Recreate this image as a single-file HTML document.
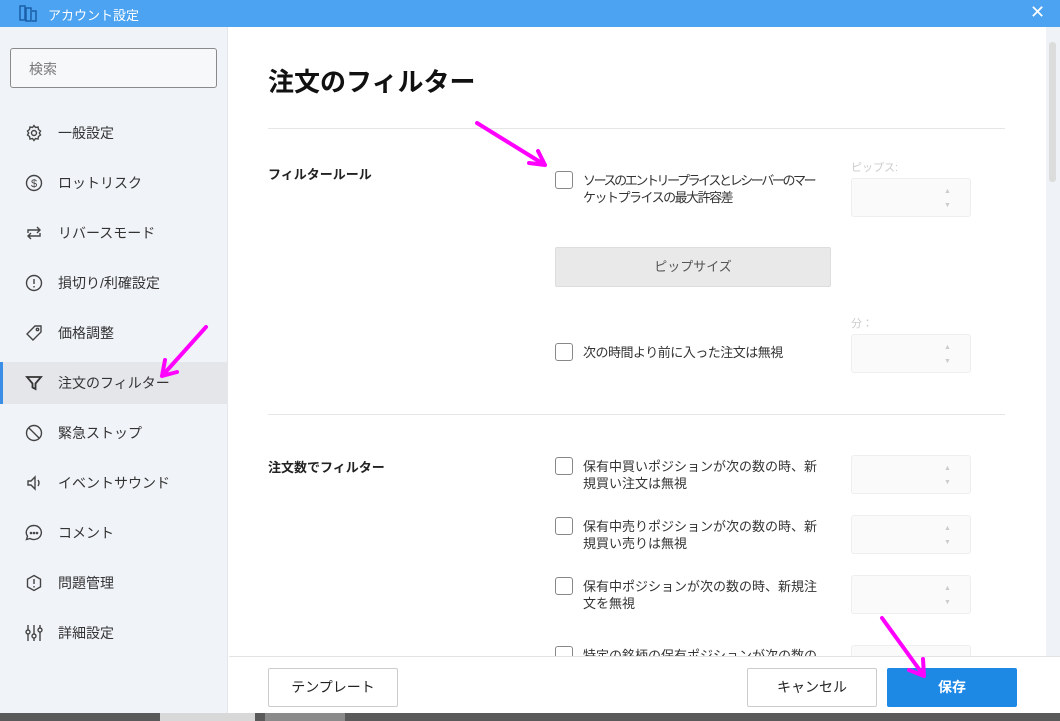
<!DOCTYPE html>
<html><head><meta charset="utf-8"><style>
*{margin:0;padding:0;box-sizing:border-box}
body{width:1060px;height:721px;overflow:hidden;position:relative;background:#fff;font-family:"Liberation Sans","Noto Sans CJK JP",sans-serif;color:#222}
.a{position:absolute}
.title{left:0;top:0;width:1060px;height:27px;background:#4ba3f1;color:#fff;font-size:13px}
.side{left:0;top:27px;width:228px;height:686px;background:#f0f3f8;border-right:1px solid #e3e6ea}
.search{left:10px;top:48px;width:207px;height:40px;border:1px solid #8a8a8a;border-radius:3px;background:#f7f8fa;font-size:14px;color:#777;padding:10px 18px}
.item{left:0;width:228px;height:42px;font-size:14px;color:#333}
.item span{position:absolute;left:58px;top:11px}
.item svg{position:absolute;left:25px;top:12px}
.cb{width:18px;height:18px;border:1px solid #888;border-radius:3px;background:#fff}
.lbl{font-size:13px;color:#333;line-height:17px;white-space:nowrap}
.inp{width:120px;height:39px;border:1px solid #eee;border-radius:3px;background:#fafafa}
.inp:after{content:"▲\A▼";white-space:pre;position:absolute;left:92px;top:6px;font-size:7px;line-height:14px;color:#ccc}
.hr{height:1px;background:#e6e6e6}
.btn{height:39px;border:1px solid #ccc;background:#fff;font-size:14px;text-align:center;line-height:37px;border-radius:2px}
</style></head><body>
<div class="a title">
<svg class="a" style="left:19px;top:5px" width="18" height="17" viewBox="0 0 18 17" fill="none" stroke="#1a5fa8" stroke-width="1.5"><rect x="1" y="1" width="5" height="14"/><rect x="7" y="3" width="5" height="13"/><path d="M13 6h4v10h-4"/></svg>
<span class="a" style="left:48px;top:5px">アカウント設定</span>
<span class="a" style="left:1030px;top:2px;font-size:18px">✕</span>
</div>
<div class="a side"></div>
<div class="a search">検索</div>

<div class="a item" style="top:112px"><svg width="18" height="18" viewBox="0 0 18 18" fill="none" stroke="#444" stroke-width="1.4"><path d="M9 1.5l1.5 2 2.5-.5.5 2.5 2 1.5-1.2 2 1.2 2-2 1.5-.5 2.5-2.5-.5-1.5 2-1.5-2-2.5.5-.5-2.5-2-1.5 1.2-2-1.2-2 2-1.5.5-2.5 2.5.5z"/><circle cx="9" cy="9" r="2.5"/></svg><span>一般設定</span></div>
<div class="a item" style="top:162px"><svg width="18" height="18" viewBox="0 0 18 18" fill="none" stroke="#444" stroke-width="1.4"><circle cx="9" cy="9" r="7.5"/><text x="9" y="13" font-size="11" text-anchor="middle" fill="#444" stroke="none" font-family="Liberation Sans">$</text></svg><span>ロットリスク</span></div>
<div class="a item" style="top:212px"><svg width="18" height="18" viewBox="0 0 18 18" fill="none" stroke="#444" stroke-width="1.4"><path d="M3 9V6h12M12 3l3 3-3 3M15 9v3H3M6 15l-3-3 3-3"/></svg><span>リバースモード</span></div>
<div class="a item" style="top:262px"><svg width="18" height="18" viewBox="0 0 18 18" fill="none" stroke="#444" stroke-width="1.4"><circle cx="9" cy="9" r="7.5"/><path d="M9 5v5M9 12v1.5"/></svg><span>損切り/利確設定</span></div>
<div class="a item" style="top:312px"><svg width="18" height="18" viewBox="0 0 18 18" fill="none" stroke="#444" stroke-width="1.4"><path d="M10 2h6v6l-8 8-6-6z"/><circle cx="12.5" cy="5.5" r="1.2"/></svg><span>価格調整</span></div>
<div class="a item" style="top:362px;background:#e4e6ea;border-left:3px solid #3a8ee6"><svg width="18" height="18" viewBox="0 0 18 18" fill="none" stroke="#333" stroke-width="1.8" style="left:22px"><path d="M2 3h14l-5.5 6.5V15l-3-1.5V9.5z"/></svg><span style="left:55px">注文のフィルター</span></div>
<div class="a item" style="top:412px"><svg width="18" height="18" viewBox="0 0 18 18" fill="none" stroke="#444" stroke-width="1.4"><circle cx="9" cy="9" r="7.5"/><path d="M3.7 3.7l10.6 10.6"/></svg><span>緊急ストップ</span></div>
<div class="a item" style="top:462px"><svg width="18" height="18" viewBox="0 0 18 18" fill="none" stroke="#444" stroke-width="1.4"><path d="M3 7h3l4-4v12l-4-4H3zM13 6q2 3 0 6"/></svg><span>イベントサウンド</span></div>
<div class="a item" style="top:512px"><svg width="18" height="18" viewBox="0 0 18 18" fill="none" stroke="#444" stroke-width="1.4"><path d="M9 1.5a7.5 7 0 1 1-4 13l-3.5 1 1-3.2A7.5 7 0 0 1 9 1.5z"/><circle cx="6" cy="9" r=".6"/><circle cx="9" cy="9" r=".6"/><circle cx="12" cy="9" r=".6"/></svg><span>コメント</span></div>
<div class="a item" style="top:562px"><svg width="18" height="18" viewBox="0 0 18 18" fill="none" stroke="#444" stroke-width="1.4"><path d="M9 1.5l6.5 3.7v7.6L9 16.5l-6.5-3.7V5.2z"/><path d="M9 5v5M9 12v1.5"/></svg><span>問題管理</span></div>
<div class="a item" style="top:612px"><svg width="18" height="18" viewBox="0 0 18 18" fill="none" stroke="#444" stroke-width="1.4"><path d="M3 1v5M3 10v7M9 1v9M9 14v3M15 1v3M15 8v9"/><circle cx="3" cy="8" r="2"/><circle cx="9" cy="12" r="2"/><circle cx="15" cy="6" r="2"/></svg><span>詳細設定</span></div>

<div class="a" style="left:268px;top:62px;font-size:26px;font-weight:bold;color:#111">注文のフィルター</div>
<div class="a hr" style="left:268px;top:128px;width:737px"></div>
<div class="a" style="left:268px;top:164px;font-size:13px;font-weight:bold">フィルタールール</div>
<div class="a cb" style="left:555px;top:171px"></div>
<div class="a lbl" style="left:583px;top:172px;letter-spacing:-2.4px">ソースのエントリープライスとレシーバーのマー<br><span style="letter-spacing:-1.5px">ケットプライスの最大許容差</span></div>
<div class="a" style="left:851px;top:159px;font-size:11px;color:#ccc">ピップス:</div>
<div class="a inp" style="left:851px;top:178px"></div>
<div class="a" style="left:555px;top:247px;width:276px;height:40px;background:#e9e9e9;border:1px solid #ddd;border-radius:2px;text-align:center;line-height:38px;font-size:13px;color:#555">ピップサイズ</div>
<div class="a" style="left:851px;top:315px;font-size:11px;color:#ccc">分：</div>
<div class="a inp" style="left:851px;top:334px"></div>
<div class="a cb" style="left:555px;top:343px"></div>
<div class="a lbl" style="left:583px;top:344px;letter-spacing:-0.5px">次の時間より前に入った注文は無視</div>
<div class="a hr" style="left:268px;top:414px;width:737px"></div>
<div class="a" style="left:268px;top:457px;font-size:13px;font-weight:bold">注文数でフィルター</div>
<div class="a cb" style="left:555px;top:457px"></div>
<div class="a lbl" style="left:583px;top:458px">保有中買いポジションが次の数の時、新<br>規買い注文は無視</div>
<div class="a inp" style="left:851px;top:455px"></div>
<div class="a cb" style="left:555px;top:517px"></div>
<div class="a lbl" style="left:583px;top:518px">保有中売りポジションが次の数の時、新<br>規買い売りは無視</div>
<div class="a inp" style="left:851px;top:515px"></div>
<div class="a cb" style="left:555px;top:577px"></div>
<div class="a lbl" style="left:583px;top:578px">保有中ポジションが次の数の時、新規注<br>文を無視</div>
<div class="a inp" style="left:851px;top:575px"></div>
<div class="a cb" style="left:555px;top:646px"></div>
<div class="a lbl" style="left:583px;top:647px">特定の銘柄の保有ポジションが次の数の</div>
<div class="a inp" style="left:851px;top:645px"></div>

<div class="a" style="left:1046px;top:27px;width:14px;height:686px;background:#eff3f8"></div>
<div class="a" style="left:1049px;top:42px;width:7px;height:140px;background:#dcdcdc;border-radius:3px"></div>

<div class="a" style="left:229px;top:656px;width:831px;height:57px;background:#fff;border-top:1px solid #e3e3e3"></div>
<div class="a btn" style="left:268px;top:668px;width:130px">テンプレート</div>
<div class="a btn" style="left:747px;top:668px;width:130px">キャンセル</div>
<div class="a btn" style="left:887px;top:668px;width:130px;background:#1e88e5;border-color:#1e88e5;color:#fff;font-weight:bold">保存</div>
<div class="a" style="left:0;top:713px;width:1060px;height:8px;background:#5a5a5a"></div>
<div class="a" style="left:160px;top:713px;width:95px;height:8px;background:#d8d8d8"></div>
<div class="a" style="left:265px;top:713px;width:80px;height:8px;background:#8a8a8a"></div>

<svg class="a" style="left:0;top:0" width="1060" height="721" fill="none" stroke="#ff00ff" stroke-width="4" stroke-linecap="round">
<path d="M477 123L545 165M545 165l-16-2M545 165l-7-14"/>
<path d="M206 327L162 376M162 376l3-16M162 376l15-4"/>
<path d="M882 618L924 676M924 676l-1-17M924 676l-15-6"/>
</svg>
</body></html>
